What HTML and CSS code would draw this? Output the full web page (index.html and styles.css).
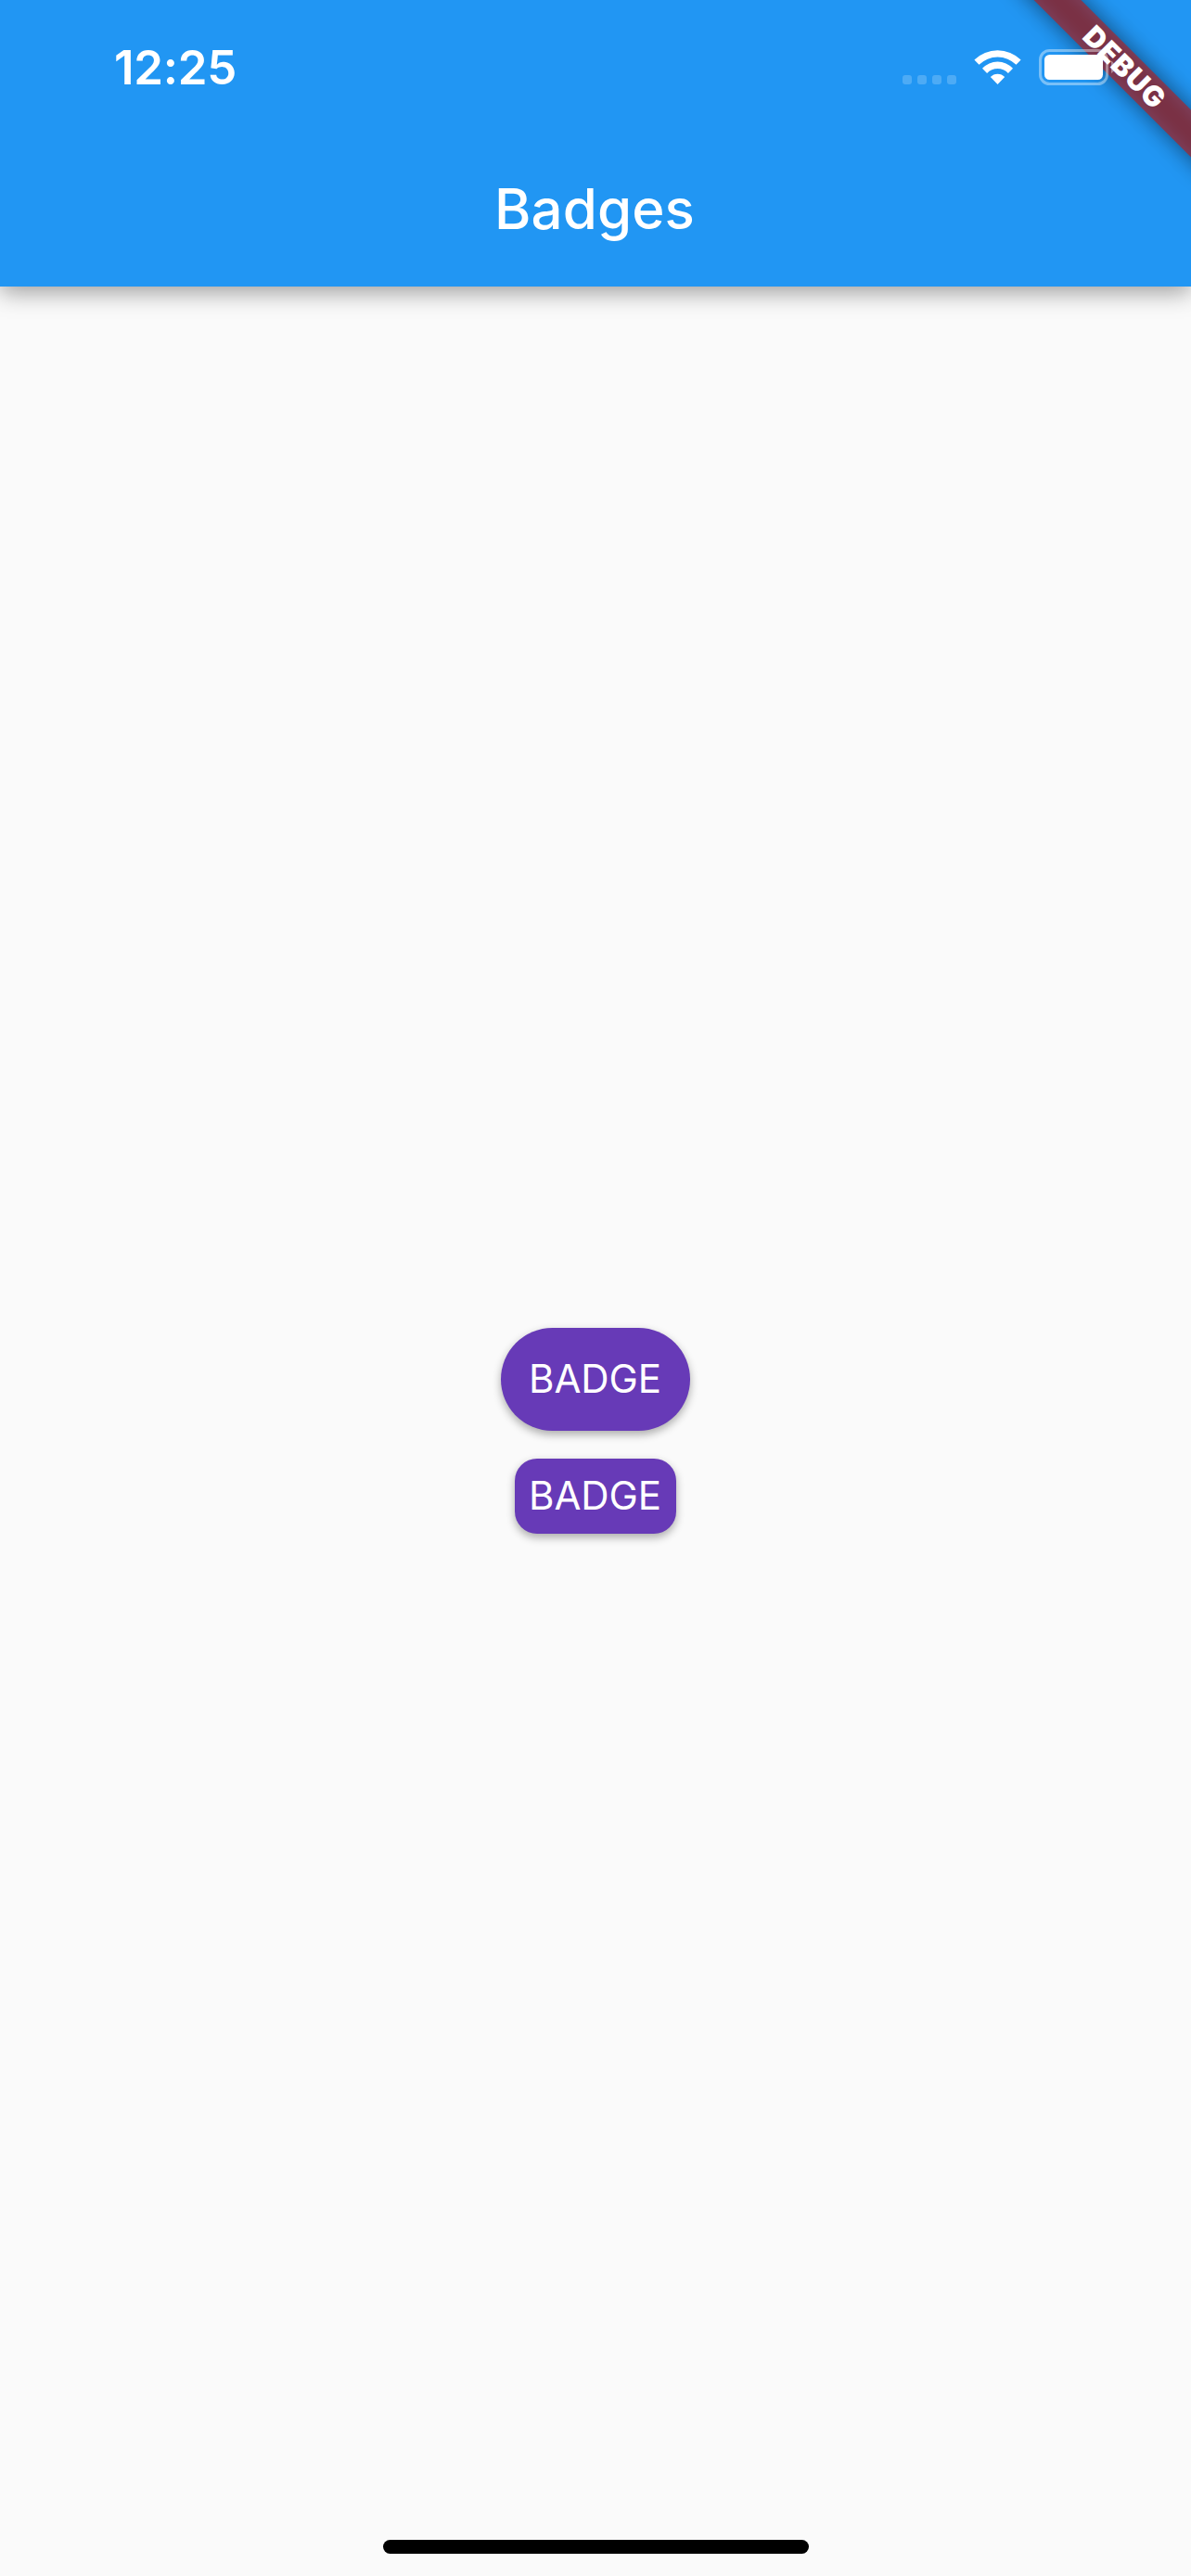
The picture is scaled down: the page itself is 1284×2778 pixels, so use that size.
FILE: index.html
```html
<!DOCTYPE html>
<html lang="en">
<head>
<meta charset="utf-8">
<title>Badges</title>
<link rel="stylesheet" href="styles.css">
</head>
<body>
<div class="screen">
  <header class="app-bar">
    <div class="status-bar">
      <time class="clock">12:25</time>
      <div class="indicators">
        <svg class="cellular" width="58" height="10" viewBox="0 0 58 10" fill="#fff" fill-opacity=".2">
          <rect width="10" height="10" rx="3"/><rect x="16" width="10" height="10" rx="3"/><rect x="32" width="10" height="10" rx="3"/><rect x="48" width="10" height="10" rx="3"/>
        </svg>
        <svg class="wifi" width="51" height="38" viewBox="0 0 51 38" fill="#fff">
          <path d="M.4 10.5A36 36 0 0 1 50.6 10.5L45.5 15.8A28.2 28.2 0 0 0 5.500 15.800Z"/>
          <path d="M9 19.800A22.500 22.500 0 0 1 42 19.800L36.900 25A15.700 15.700 0 0 0 14.100 25Z"/>
          <path d="M17.800 29A10.500 10.500 0 0 1 33.200 29L25.500 37Z"/>
        </svg>
        <svg class="battery" width="82" height="39" viewBox="0 0 82 39">
          <rect x="1.500" y="1.500" width="72" height="36" rx="10" fill="none" stroke="#fff" stroke-opacity=".4" stroke-width="3"/>
          <rect x="6" y="6" width="63" height="27" rx="5.500" fill="#fff"/>
          <path d="M78 12.500Q82 15 82 19.500T78 26Z" fill="#fff" fill-opacity=".4"/>
        </svg>
      </div>
    </div>
    <h1 class="title">Badges</h1>
  </header>
  <main class="content">
    <span class="badge badge-large">BADGE</span>
    <span class="badge badge-small">BADGE</span>
  </main>
  <div class="home-indicator"></div>
  <div class="debug-ribbon"><span class="debug-label">DEBUG</span></div>
</div>
</body>
</html>
```
FILE: styles.css
```css
* { box-sizing: border-box; }
body { margin: 0; }
.screen {
  position: relative;
  display: flex;
  flex-direction: column;
  width: 1284px;
  height: 2778px;
  overflow: hidden;
  background: #fafafa;
  font-family: Inter, "Liberation Sans", sans-serif;
  color: #fff;
}
.app-bar {
  flex: none;
  height: 309px;
  background: #2196f3;
  box-shadow: 0 6px 24px rgba(0,0,0,.38);
}
.status-bar {
  display: flex;
  justify-content: space-between;
  height: 141px;
  padding: 53px 82px 0 123px;
}
.clock {
  margin-top: -10px;
  font-size: 51px;
  font-weight: 600;
  line-height: 60px;
  letter-spacing: -.3px;
}
.indicators { position: relative; z-index: 2; display: flex; height: 39px; }
.cellular { margin: 28px 19px 0 0; }
.wifi { margin: 1px 19px 0 0; }
.title {
  margin: 0;
  padding-right: 2px;
  font-size: 60px;
  font-weight: 500;
  line-height: 168px;
  letter-spacing: .1px;
  text-align: center;
}
.content {
  flex: 1;
  display: flex;
  flex-direction: column;
  align-items: center;
  justify-content: center;
  gap: 30px;
  padding-bottom: 1px;
}
.badge {
  display: flex;
  align-items: center;
  justify-content: center;
  padding: 0 1px 2px 0;
  background: #673ab7;
  font-size: 42px;
  line-height: 51px;
  letter-spacing: -.1px;
  box-shadow: 0 4px 10px rgba(0,0,0,.32);
}
.badge-large { width: 204px; height: 111px; border-radius: 56px; }
.badge-small { width: 174px; height: 81px; border-radius: 24px; }
.home-indicator {
  position: absolute;
  left: 413px;
  bottom: 24px;
  width: 459px;
  height: 15px;
  border-radius: 8px;
  background: #000;
}
.debug-ribbon {
  position: absolute;
  top: 54px;
  left: 1062px;
  width: 300px;
  height: 36px;
  transform: rotate(45deg);
  text-align: center;
}
.debug-ribbon::before,
.debug-ribbon::after {
  content: "";
  position: absolute;
  inset: 0;
}
.debug-ribbon::before { background: rgba(0,0,0,.5); filter: blur(12px); }
.debug-ribbon::after { background: rgba(183,28,28,.627); }
.debug-label {
  position: relative;
  z-index: 1;
  display: block;
  padding-left: 2px;
  font-size: 30.6px;
  font-weight: 900;
  line-height: 35px;
  letter-spacing: 1px;
}
```
